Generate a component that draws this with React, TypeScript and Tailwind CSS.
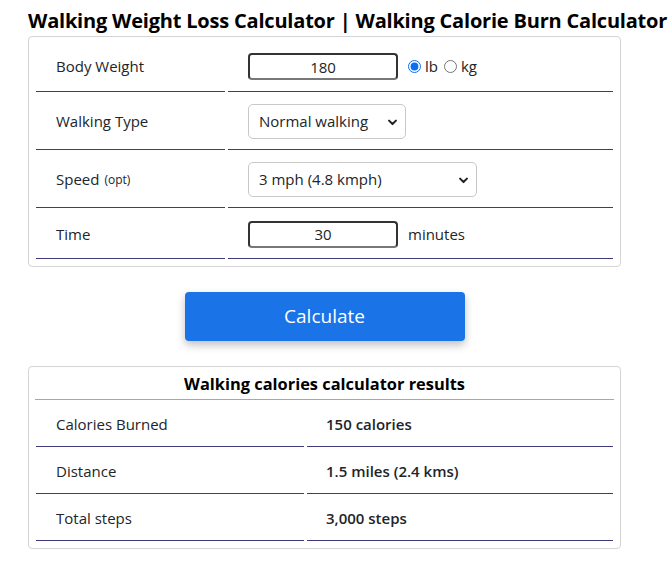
import { useState } from 'react';

interface ResultRow {
  label: string;
  value: string;
}

const results: ResultRow[] = [
  { label: 'Calories Burned', value: '150 calories' },
  { label: 'Distance', value: '1.5 miles (2.4 kms)' },
  { label: 'Total steps', value: '3,000 steps' },
];

const Chevron = () => (
  <svg
    className="pointer-events-none absolute right-[8px] top-1/2 -translate-y-1/2"
    width="11"
    height="11"
    viewBox="0 0 16 16"
    fill="none"
    stroke="#222"
    strokeWidth="3"
    strokeLinecap="round"
    strokeLinejoin="round"
  >
    <path d="M3 6l5 5 5-5" />
  </svg>
);

const App = () => {
  const [weight, setWeight] = useState('180');
  const [time, setTime] = useState('30');
  const [unit, setUnit] = useState('lb');

  const cell = 'border-b border-[#3f3a7a] flex items-center pt-[2px]';

  return (
    <div className="w-[670px] h-[566px] bg-white text-[#212529] font-['Open_Sans','Noto_Sans',sans-serif]">
      <h1 className="pl-[28px] pt-[7px] text-[20px] font-bold leading-[27px] text-black whitespace-nowrap tracking-[-0.2px]">
        Walking Weight Loss Calculator | Walking Calorie Burn Calculator
      </h1>

      <div className="ml-[28px] mt-[2px] w-[593px] border border-[#d4d4d4] rounded-[4px] px-[7px] pt-[3px] pb-[7px] text-[15px]">
        <div className="grid grid-cols-[189px_1fr] gap-x-[3px]">
          <div className={`${cell} h-[52px] pl-[20px]`}>Body Weight</div>
          <div className={`${cell} h-[52px] pl-[20px] gap-[6px]`}>
            <input
              value={weight}
              onChange={(e) => setWeight(e.target.value)}
              className="w-[150px] h-[27px] border-2 border-[#333] border-b-[#777] rounded-[4px] text-center text-[15px] outline-none"
            />
            <label className="flex items-center gap-[4px] ml-[4px]">
              <input
                type="radio"
                name="unit"
                checked={unit === 'lb'}
                onChange={() => setUnit('lb')}
                className="w-[13px] h-[13px] m-0 accent-[#0b6ef0]"
              />
              lb
            </label>
            <label className="flex items-center gap-[4px]">
              <input
                type="radio"
                name="unit"
                checked={unit === 'kg'}
                onChange={() => setUnit('kg')}
                className="w-[13px] h-[13px] m-0 accent-[#0b6ef0]"
              />
              kg
            </label>
          </div>

          <div className={`${cell} h-[58px] pl-[20px]`}>Walking Type</div>
          <div className={`${cell} h-[58px] pl-[20px]`}>
            <div className="relative">
              <select className="appearance-none w-[158px] h-[35px] border border-[#c8c8c8] rounded-[5px] pl-[10px] bg-white text-[15px] outline-none">
                <option>Normal walking</option>
                <option>Brisk walking</option>
                <option>Uphill walking</option>
              </select>
              <Chevron />
            </div>
          </div>

          <div className={`${cell} h-[58px] pl-[20px]`}>
            Speed <span className="ml-[5px] text-[12px]">(opt)</span>
          </div>
          <div className={`${cell} h-[58px] pl-[20px]`}>
            <div className="relative">
              <select className="appearance-none w-[229px] h-[35px] border border-[#c8c8c8] rounded-[5px] pl-[10px] bg-white text-[15px] outline-none">
                <option>3 mph (4.8 kmph)</option>
                <option>2 mph (3.2 kmph)</option>
                <option>4 mph (6.4 kmph)</option>
              </select>
              <Chevron />
            </div>
          </div>

          <div className={`${cell} h-[51px] pl-[20px]`}>Time</div>
          <div className={`${cell} h-[51px] pl-[20px] gap-[10px]`}>
            <input
              value={time}
              onChange={(e) => setTime(e.target.value)}
              className="w-[150px] h-[27px] border-2 border-[#333] border-b-[#777] rounded-[4px] text-center text-[15px] outline-none"
            />
            minutes
          </div>
        </div>
      </div>

      <div className="w-[593px] ml-[28px] flex justify-center pt-[25px] pb-[25px]">
        <button className="w-[280px] h-[49px] bg-[#1b73e8] text-white text-[19px] rounded-[4px] shadow-[0_4px_8px_rgba(0,0,0,0.25)]">
          Calculate
        </button>
      </div>

      <div className="ml-[28px] w-[593px] border border-[#d4d4d4] rounded-[4px] px-[7px] pb-[7px] text-[15px]">
        <div className="h-[33px] -mx-[1px] pt-[2px] border-b border-[#a8a8a8] flex items-center justify-center font-bold text-black text-[16.4px]">
          Walking calories calculator results
        </div>
        <div className="grid grid-cols-[268px_1fr] gap-x-[3px]">
          {results.map((r) => (
            <div key={r.label} className="contents">
              <div className={`${cell} h-[47px] pl-[20px]`}>{r.label}</div>
              <div className={`${cell} h-[47px] pl-[19px] font-semibold`}>{r.value}</div>
            </div>
          ))}
        </div>
      </div>
    </div>
  );
};

export default App;
